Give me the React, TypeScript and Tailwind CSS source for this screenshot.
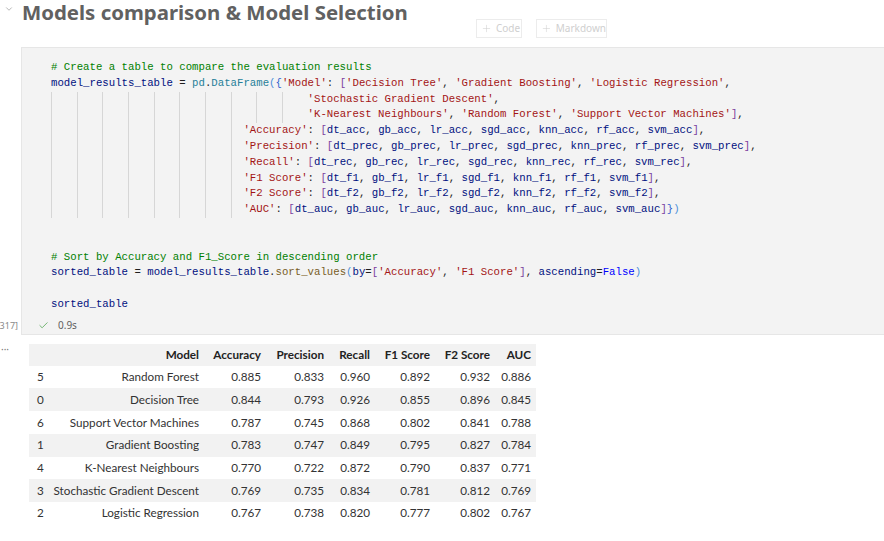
import React from 'react';
import { ChevronDown, Plus, Check } from 'lucide-react';

type Tok = [string, string];

const colors: Record<string, string> = {
  c: 'text-[#008000]',
  v: 'text-[#001080]',
  o: 'text-[#1f1f1f]',
  s: 'text-[#a31515]',
  t: 'text-[#267f99]',
  f: 'text-[#795e26]',
  k: 'text-[#0000ff]',
  p: 'text-[#4a8fd8]',
  q: 'text-[#2f5fcf]',
  r: 'text-[#7b3f9e]',
};

const list = (prefix: string): Tok[] => {
  const names = ['dt', 'gb', 'lr', 'sgd', 'knn', 'rf', 'svm'];
  const out: Tok[] = [['r', '[']];
  names.forEach((n, i) => {
    out.push(['v', `${n}_${prefix}`]);
    if (i < names.length - 1) out.push(['o', ', ']);
  });
  out.push(['r', ']']);
  return out;
};

const lines: { indent: number; toks: Tok[] }[] = [
  { indent: 0, toks: [['c', '# Create a table to compare the evaluation results']] },
  {
    indent: 0,
    toks: [
      ['v', 'model_results_table'], ['o', ' = '], ['t', 'pd'], ['o', '.'], ['t', 'DataFrame'],
      ['p', '('], ['q', '{'], ['s', "'Model'"], ['o', ': '], ['r', '['],
      ['s', "'Decision Tree'"], ['o', ', '], ['s', "'Gradient Boosting'"], ['o', ', '],
      ['s', "'Logistic Regression'"], ['o', ','],
    ],
  },
  { indent: 40, toks: [['s', "'Stochastic Gradient Descent'"], ['o', ',']] },
  {
    indent: 40,
    toks: [
      ['s', "'K-Nearest Neighbours'"], ['o', ', '], ['s', "'Random Forest'"], ['o', ', '],
      ['s', "'Support Vector Machines'"], ['r', ']'], ['o', ','],
    ],
  },
  { indent: 30, toks: [['s', "'Accuracy'"], ['o', ': '], ...list('acc'), ['o', ',']] },
  { indent: 30, toks: [['s', "'Precision'"], ['o', ': '], ...list('prec'), ['o', ',']] },
  { indent: 30, toks: [['s', "'Recall'"], ['o', ': '], ...list('rec'), ['o', ',']] },
  { indent: 30, toks: [['s', "'F1 Score'"], ['o', ': '], ...list('f1'), ['o', ',']] },
  { indent: 30, toks: [['s', "'F2 Score'"], ['o', ': '], ...list('f2'), ['o', ',']] },
  { indent: 30, toks: [['s', "'AUC'"], ['o', ': '], ...list('auc'), ['q', '}'], ['p', ')']] },
  { indent: 0, toks: [] },
  { indent: 0, toks: [] },
  { indent: 0, toks: [['c', '# Sort by Accuracy and F1_Score in descending order']] },
  {
    indent: 0,
    toks: [
      ['v', 'sorted_table'], ['o', ' = '], ['v', 'model_results_table'], ['o', '.'],
      ['f', 'sort_values'], ['p', '('], ['v', 'by'], ['o', '='], ['r', '['],
      ['s', "'Accuracy'"], ['o', ', '], ['s', "'F1 Score'"], ['r', ']'], ['o', ', '],
      ['v', 'ascending'], ['o', '='], ['k', 'False'], ['p', ')'],
    ],
  },
  { indent: 0, toks: [] },
  { indent: 0, toks: [['v', 'sorted_table']] },
];

const rows = [
  ['5', 'Random Forest', '0.885', '0.833', '0.960', '0.892', '0.932', '0.886'],
  ['0', 'Decision Tree', '0.844', '0.793', '0.926', '0.855', '0.896', '0.845'],
  ['6', 'Support Vector Machines', '0.787', '0.745', '0.868', '0.802', '0.841', '0.788'],
  ['1', 'Gradient Boosting', '0.783', '0.747', '0.849', '0.795', '0.827', '0.784'],
  ['4', 'K-Nearest Neighbours', '0.770', '0.722', '0.872', '0.790', '0.837', '0.771'],
  ['3', 'Stochastic Gradient Descent', '0.769', '0.735', '0.834', '0.781', '0.812', '0.769'],
  ['2', 'Logistic Regression', '0.767', '0.738', '0.820', '0.777', '0.802', '0.767'],
];

const headers = ['', 'Model', 'Accuracy', 'Precision', 'Recall', 'F1 Score', 'F2 Score', 'AUC'];

const gridCols = 'grid grid-cols-[19px_156px_62px_63px_46px_60px_60px_41px]';

function CodeLine({ indent, toks }: { indent: number; toks: Tok[] }) {
  const guides: number[] = [];
  for (let i = 0; i < indent; i += 4) guides.push(Math.min(4, indent - i));
  return (
    <div className="h-[15.8px] whitespace-pre">
      {guides.map((w, i) => (
        <span key={i} className="inline-block shadow-[inset_1px_0_0_#d6d6d6]">
          {' '.repeat(w)}
        </span>
      ))}
      {toks.map(([k, t], i) => (
        <span key={i} className={colors[k]}>
          {t}
        </span>
      ))}
      {toks.length === 0 && indent === 0 ? ' ' : null}
    </div>
  );
}

export default function App() {
  return (
    <div className="w-[884px] h-[541px] overflow-hidden bg-white font-['Noto_Sans',sans-serif]">
      {/* heading + insert toolbar */}
      <div className="relative h-[47px]">
        <div className="flex items-start">
          <ChevronDown className="ml-[4px] mt-[4px] h-[10px] w-[10px] text-[#8a8a8a]" strokeWidth={1.5} />
          <h2 className="ml-[8px] text-[20.4px] leading-[24px] font-bold text-[#616161]">
            Models comparison &amp; Model Selection
          </h2>
        </div>
        <div className="absolute left-[476px] top-[19px] flex gap-[14px] text-[10px] text-[#cfcfcf]">
          <div className="flex h-[19px] w-[46px] items-center gap-[4px] border border-[#ececec] pl-[4px]">
            <Plus className="h-[11px] w-[11px]" strokeWidth={1.2} />
            <span>Code</span>
          </div>
          <div className="flex h-[19px] w-[71px] items-center gap-[4px] border border-[#ececec] pl-[4px]">
            <Plus className="h-[11px] w-[11px]" strokeWidth={1.2} />
            <span>Markdown</span>
          </div>
        </div>
      </div>

      {/* code cell */}
      <div className="flex">
        <div className="flex w-[21px] shrink-0 flex-col justify-end">
          <div className="mb-[1px] flex h-[16px] items-center justify-end whitespace-nowrap pr-[3px] text-[9px] text-[#8a8a8a]">
            [317]
          </div>
        </div>
        <div className="flex-1 border border-r-0 border-[#e6e6e6] bg-[#f3f3f3]">
          <div className="pl-[29px] pt-[12px] font-['Liberation_Mono',monospace] text-[10.7px] leading-[15.8px]">
            {lines.map((l, i) => (
              <CodeLine key={i} indent={l.indent} toks={l.toks} />
            ))}
          </div>
          <div className="mt-[5px] flex h-[16px] items-center pl-[16px] text-[10px] text-[#616161]">
            <Check className="h-[11px] w-[11px] text-[#3c9a3c]" strokeWidth={1.5} />
            <span className="ml-[9px]">0.9s</span>
          </div>
        </div>
      </div>

      {/* output */}
      <div className="mt-[9px] flex">
        <div className="w-[21px] shrink-0 pl-[1px] text-[10px] leading-[10px] text-[#777]">···</div>
        <div className="pl-[8px] font-['Lato',sans-serif] text-[11.7px] text-[#333]">
          <div className={`${gridCols} h-[22px] items-center bg-[#f2f2f2] font-bold text-[#222]`}>
            {headers.map((h, i) => (
              <div key={i} className="pr-[5px] text-right whitespace-nowrap">
                {h}
              </div>
            ))}
          </div>
          {rows.map((r, ri) => (
            <div
              key={ri}
              className={`${gridCols} h-[22.7px] items-center ${ri % 2 === 1 ? 'bg-[#f2f2f2]' : 'bg-white'}`}
            >
              {r.map((c, ci) => (
                <div
                  key={ci}
                  className={ci === 0 ? 'pl-[8px] whitespace-nowrap' : 'pr-[5px] text-right whitespace-nowrap'}
                >
                  {c}
                </div>
              ))}
            </div>
          ))}
        </div>
      </div>
    </div>
  );
}
